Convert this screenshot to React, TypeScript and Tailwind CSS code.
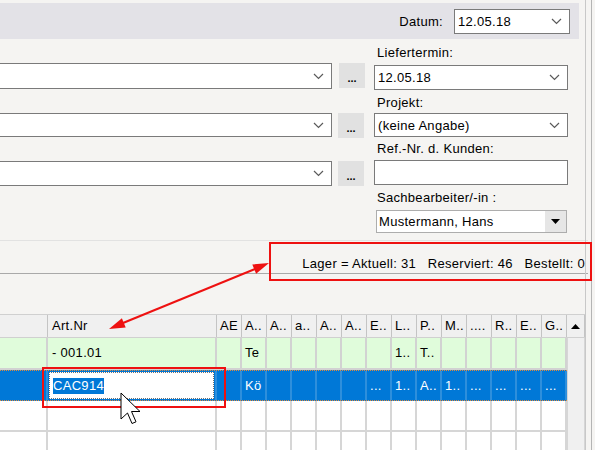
import React from "react";

const FONT = { fontFamily: '"Liberation Sans", Arial, sans-serif' };

function Chevron() {
  return (
    <svg width="11" height="7" viewBox="0 0 11 7" className="shrink-0">
      <polyline points="1,1 5.5,5.5 10,1" fill="none" stroke="#5a5a5a" strokeWidth="1.2" />
    </svg>
  );
}

function Combo({ value, className }: { value?: string; className: string }) {
  return (
    <div className={`flex shrink-0 items-center border border-[#7a7a7a] bg-white pl-[3px] pr-[7px] ${className}`}>
      <span className="flex-1 truncate leading-[15px]">{value}</span>
      <Chevron />
    </div>
  );
}

function DotsButton({ className }: { className: string }) {
  return (
    <div className={`flex w-[26px] shrink-0 items-end justify-center bg-[#e1e1e1] pb-[5px] text-[11px] font-bold leading-[10px] tracking-normal ${className}`}>
      ...
    </div>
  );
}

const narrowHeads = ["AE", "A..", "A..", "a..", "A..", "A..", "E..", "L..", "P..", "M..", "....", "R..", "E..", "G.."];
const greenRow = ["", "Te", "", "", "", "", "", "1..", "T..", "", "", "", "", ""];
const blueRow = ["", "Kö", "", "", "", "", "...", "1..", "A..", "1..", "...", "...", "...", "..."];

export default function App() {
  return (
    <div style={FONT} className="relative flex h-[450px] w-[595px] overflow-hidden bg-[#f5f4f2] text-[13px] tracking-[0.3px] text-black">
      {/* main column */}
      <div className="flex w-[585px] shrink-0 flex-col">
        {/* top band */}
        <div className="mt-[3px] flex h-[36px] w-[579px] shrink-0 items-center justify-end bg-[#e3e2e7] pr-[9px]">
          <span className="mr-[11px] mt-[2px]">Datum:</span>
          <Combo value="12.05.18" className="h-[25px] w-[116px]" />
        </div>

        {/* form area */}
        <div className="flex h-[201px] shrink-0">
          <div className="flex w-[365px] flex-col pt-[24px]">
            <div className="flex">
              <Combo className="h-[26px] w-[332px] border-l-0" />
              <DotsButton className="ml-[7px] h-[25px]" />
            </div>
            <div className="mt-[24px] flex">
              <Combo className="h-[24px] w-[332px] border-l-0" />
              <DotsButton className="ml-[6px] h-[25px]" />
            </div>
            <div className="mt-[23px] flex">
              <Combo className="h-[25px] w-[332px] border-l-0" />
              <DotsButton className="ml-[6px] h-[25px]" />
            </div>
          </div>
          <div className="ml-[9px] flex w-[194px] flex-col pt-[4px]">
            <div className="h-[20px] shrink-0 pl-[3px] leading-[20px]">Liefertermin:</div>
            <Combo value="12.05.18" className="mt-[2px] h-[25px] w-[194px]" />
            <div className="mt-[3px] h-[20px] shrink-0 pl-[3px] leading-[20px]">Projekt:</div>
            <Combo value="(keine Angabe)" className="h-[24px] w-[194px]" />
            <div className="mt-[2px] h-[20px] shrink-0 pl-[3px] leading-[20px]">Ref.-Nr. d. Kunden:</div>
            <div className="mt-[1px] h-[25px] w-[194px] shrink-0 border border-[#7a7a7a] bg-white" />
            <div className="mt-[3px] h-[20px] shrink-0 pl-[3px] leading-[20px]">Sachbearbeiter/-in :</div>
            <div className="ml-[2px] mt-[2px] flex h-[23px] w-[191px] shrink-0 items-center border border-[#adadad] bg-white">
              <span className="flex-1 pl-[2px]">Mustermann, Hans</span>
              <div className="flex h-full w-[21px] items-center justify-center bg-[#e6e6e6]">
                <svg width="9" height="5" viewBox="0 0 9 5">
                  <polygon points="0,0 9,0 4.5,5" fill="#000" />
                </svg>
              </div>
            </div>
          </div>
        </div>

        {/* status bar */}
        <div className="flex h-[34px] w-[588px] shrink-0 justify-end border-t border-b border-t-[#e2e2e2] border-b-[#a9a9a9] pr-[3px] pt-[15px]">
          <span className="whitespace-pre leading-[15px]">Lager = Aktuell: 31   Reserviert: 46   Bestellt: 0</span>
        </div>

        {/* grid */}
        <div className="mt-[40px] flex shrink-0 flex-col">
          <div className="flex h-[24px] shrink-0 border-t border-b border-[#d0d0d0] bg-[#f0f0f0]">
            <div className="w-[48px] shrink-0 border-r border-[#c4c4c4]" />
            <div className="w-[169px] shrink-0 border-r border-[#c4c4c4] pl-[4px] leading-[22px]">Art.Nr</div>
            {narrowHeads.map((h, i) => (
              <div key={i} className="w-[25px] shrink-0 overflow-hidden whitespace-nowrap border-r border-[#c4c4c4] pl-[3px] leading-[22px]">
                {h}
              </div>
            ))}
            <div className="flex w-[18px] shrink-0 items-center justify-center border-r border-[#c4c4c4]">
              <svg width="9" height="5" viewBox="0 0 9 5">
                <polygon points="4.5,0 9,5 0,5" fill="#000" />
              </svg>
            </div>
          </div>

          <div className="flex shrink-0">
            <div className="flex w-[567px] shrink-0 flex-col">
              {/* green row */}
              <div className="flex h-[32px] shrink-0 border-b-2 border-[#d2d2d2] bg-[#e0fcdb]">
                <div className="w-[48px] shrink-0 border-r-2 border-[#d2d2d2]" />
                <div className="w-[169px] shrink-0 border-r-2 border-[#d2d2d2] pl-[4px] pt-[5px]">- 001.01</div>
                {greenRow.map((t, i) => (
                  <div key={i} className="w-[25px] shrink-0 overflow-hidden whitespace-nowrap border-r-2 border-[#d2d2d2] pl-[3px] pt-[5px]">
                    {t}
                  </div>
                ))}
              </div>
              {/* selected row */}
              <div className="flex h-[31px] shrink-0 border-y border-dotted border-[#e08a3c] bg-[#0078d7] text-white">
                <div className="w-[48px] shrink-0 border-r-2 border-[#2e8fdc]" />
                <div className="flex w-[169px] shrink-0 items-center border-r-2 border-[#2e8fdc]">
                  <div className="mx-px flex h-[27px] w-full items-center border border-dotted border-[#707070] bg-white pl-[3px]">
                    <span className="bg-[#0078d7] leading-[16px] text-white">CAC914</span>
                  </div>
                </div>
                {blueRow.map((t, i) => (
                  <div key={i} className="w-[25px] shrink-0 overflow-hidden whitespace-nowrap border-r-2 border-[#2e8fdc] pl-[3px] pt-[5px]">
                    {t}
                  </div>
                ))}
              </div>
              {[0, 1].map((r) => (
                <div key={r} className="flex h-[31px] shrink-0 border-b-2 border-[#d6d6d6] bg-white">
                  <div className="w-[48px] shrink-0 border-r-2 border-[#d6d6d6]" />
                  <div className="w-[169px] shrink-0 border-r-2 border-[#d6d6d6]" />
                  {narrowHeads.map((_, i) => (
                    <div key={i} className="w-[25px] shrink-0 border-r-2 border-[#d6d6d6]" />
                  ))}
                </div>
              ))}
            </div>
            <div className="h-[130px] w-[18px] shrink-0 border-x border-[#d6d6d6] bg-[#f0f0f0]" />
          </div>
        </div>
      </div>

      {/* right splitter */}
      <div className="flex w-[10px] shrink-0 border-l border-[#c8c8c8]">
        <div className="ml-[5px] h-full border-l border-[#b4b4b4]" />
      </div>

      {/* annotations */}
      <div className="absolute left-[269px] top-[242px] h-[39px] w-[323px] border-2 border-[#ee1111]" />
      <div className="absolute left-[42px] top-[367px] h-[41px] w-[184px] border-2 border-[#ee1111]" />
      <svg className="absolute left-0 top-0" width="595" height="450" viewBox="0 0 595 450">
        <line x1="123" y1="323" x2="255" y2="269" stroke="#ee1111" strokeWidth="2" />
        <polygon points="109,329 125.7,327.5 121.9,318.3" fill="#ee1111" />
        <polygon points="269,263 256.1,273.7 252.3,264.5" fill="#ee1111" />
        <path
          d="M121 393 L121 419 L127.5 413 L132 423.5 L136 421.8 L131.5 411.5 L140 411.5 Z"
          fill="#fff"
          stroke="#000"
          strokeWidth="1"
          strokeLinejoin="round"
        />
      </svg>
    </div>
  );
}
